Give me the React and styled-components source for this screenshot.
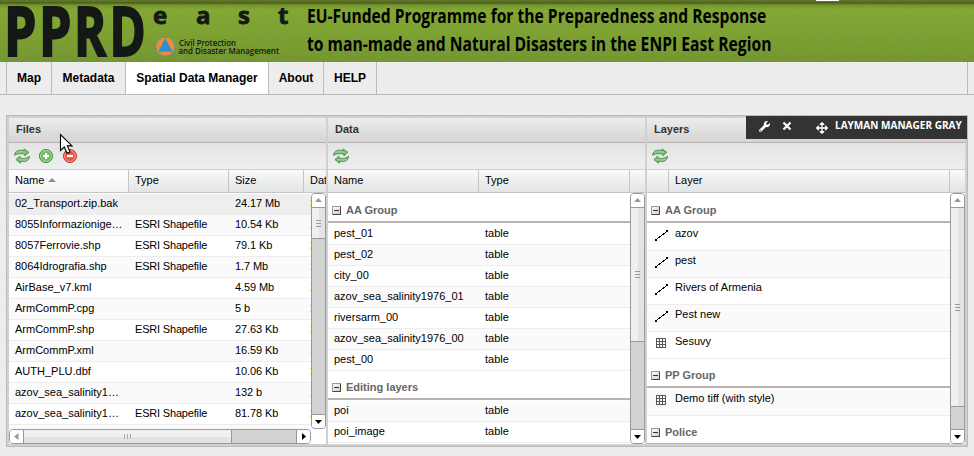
import React from "react";
import styled, { createGlobalStyle, css } from "styled-components";
import { FaWrench, FaArrowsAlt } from "react-icons/fa";

const noise = (opacity) =>
  `url("data:image/svg+xml,${encodeURIComponent(
    `<svg xmlns='http://www.w3.org/2000/svg' width='160' height='160'><filter id='n'><feTurbulence type='fractalNoise' baseFrequency='0.55' numOctaves='3' stitchTiles='stitch'/><feColorMatrix type='saturate' values='0'/></filter><rect width='160' height='160' filter='url(#n)' opacity='${opacity}'/></svg>`
  )}")`;

const GlobalStyle = createGlobalStyle`
  * { box-sizing: border-box; }
  html, body { margin: 0; padding: 0; overflow: hidden; }
  body { background: #ececec; }
`;

const Page = styled.div`
  width: 974px;
  height: 456px;
  overflow: hidden;
  position: relative;
  background: ${noise(0.06)}, #eeeeee;
  font-family: "Liberation Sans", Arial, sans-serif;
  font-size: 11px;
  color: #000;
`;

const Header = styled.header`
  position: relative;
  height: 62px;
  display: flex;
  background: ${noise(0.1)},
    linear-gradient(#5a7021 0, #5a7021 2px, #43570f 2px, #4b6114 3px, #5e7a1c 4px, #759a28 6px, #7fa62c 10px, #7ba12b 30px, #70942a 62px);
`;

const Notch = styled.span`
  position: absolute;
  left: 816px;
  top: 0;
  width: 23px;
  height: 1px;
  background: #fff;
`;

const Logo = styled.svg`
  flex: none;
  width: 307px;
  height: 62px;
  font-family: "Open Sans", sans-serif;
  font-weight: 700;
  fill: #141817;
`;

const Headline = styled.h1`
  margin: 2px 0 0;
  font: 700 20px/28px "Open Sans", sans-serif;
  color: #000;
  white-space: nowrap;
`;

const HeadlineRow = styled.span`
  display: block;
  width: max-content;
  transform-origin: 0 50%;
  transform: scaleX(${(p) => p.$squeeze});
`;

const Nav = styled.nav`
  display: flex;
  height: 33px;
  padding-left: 6px;
  border-bottom: 1px solid #bbb;
`;

const NavTrack = styled.div`
  display: flex;
  width: 962px;
  border: solid #bbb;
  border-width: 0 1px;
`;

const NavItem = styled.a`
  width: ${(p) => p.$width}px;
  border-right: 1px solid #bbb;
  text-align: center;
  font-weight: 700;
  font-size: 12px;
  line-height: 32px;
  white-space: nowrap;
  background: ${(p) => (p.$active ? "#fff" : "transparent")};
`;

const Manager = styled.main`
  position: relative;
  display: flex;
  gap: 2px;
  width: 962px;
  height: 332px;
  margin: 20px 0 0 6px;
  padding: 2px;
  border: 1px solid #bbb;
  background: #d0d0d0;
`;

const Panel = styled.section`
  position: relative;
  display: flex;
  flex-direction: column;
  width: ${(p) => p.$width}px;
  height: 326px;
  overflow: hidden;
  background: #fff;
`;

const PanelTitle = styled.h2`
  margin: 0;
  flex: none;
  height: 25px;
  padding-left: 7px;
  border-bottom: 1px solid #bcb0b0;
  background: linear-gradient(#ededed, #d4d4d4);
  font-size: 11px;
  line-height: 23px;
  color: #333;
`;

const Toolbar = styled.div`
  flex: none;
  display: flex;
  gap: 8px;
  height: 27px;
  padding: 5px 0 0 5px;
  border-bottom: 1px solid #d0d0d0;
  background: linear-gradient(#e3e3e3, #efefef);
`;

const Columns = styled.div`
  flex: none;
  display: flex;
  height: 23px;
  border-bottom: 1px solid #c5c5c5;
  background: linear-gradient(#f9f9f9, #e3e4e6);
  line-height: 20px;
`;

const Column = styled.div`
  flex: none;
  display: flex;
  gap: 4px;
  width: ${(p) => p.$width}px;
  padding-left: 6px;
  border-right: 1px solid #c5c5c5;
  overflow: hidden;
  white-space: nowrap;
  ${(p) => p.$sorted && css`background: linear-gradient(#fff, #f4f4f5);`}
`;

const SortMark = styled.i`
  height: 0;
  margin-top: 8px;
  border: 4px solid transparent;
  border-top: 0;
  border-bottom: 4px solid #8d8d8d;
`;

const Body = styled.div`
  flex: 1;
  min-height: 0;
  display: flex;
`;

const List = styled.div`
  flex: 1;
  min-width: 0;
  padding-top: 1px;
  overflow: hidden;
`;

const Row = styled.div`
  display: flex;
  height: ${(p) => (p.$tall ? 27 : 21)}px;
  border-bottom: 1px solid #ededed;
  background: ${(p) => (p.$selected ? "#eeeeee" : p.$alt ? "#fafafa" : "#fff")};
  line-height: 19px;
`;

const Cell = styled.div`
  flex: none;
  width: ${(p) => p.$width}px;
  padding-left: 6px;
  overflow: hidden;
  white-space: nowrap;
  letter-spacing: ${(p) => p.$tracking || 0}px;
  ${(p) => p.$date && css`color: #e39a2c;`}
`;

const IconCell = styled.div`
  flex: none;
  width: 22px;
  padding: 3px 0 0 7px;
  height: 26px;
`;

const GroupHead = styled.div`
  display: flex;
  align-items: center;
  gap: 5px;
  height: 30px;
  padding: 4px 0 2px 4px;
  background: linear-gradient(#bcb0b0, #bcb0b0) 0 27px / 100% 2px no-repeat;
  font-weight: 700;
  color: #666;
  line-height: 21px;
`;

const Collapse = styled.i`
  width: 9px;
  height: 9px;
  border: 1px solid #777;
  border-color: #999 #444 #444 #999;
  border-radius: 1px;
  background: linear-gradient(#333, #333) 1px 3px / 5px 1px no-repeat,
    linear-gradient(135deg, #fff, #ccc);
`;

const Scroll = styled.div`
  flex: none;
  display: flex;
  flex-direction: ${(p) => (p.$horizontal ? "row" : "column")};
  ${(p) => (p.$horizontal ? "height" : "width")}: 15px;
  ${(p) => p.$length && css`${p.$horizontal ? "width" : "height"}: ${p.$length}px;`}
  border: 1px solid #999;
  border-radius: 4px;
  background: #d3d3d3;
  overflow: hidden;
`;

const ScrollButton = styled.div`
  flex: none;
  display: flex;
  align-items: center;
  justify-content: center;
  width: ${(p) => (p.$horizontal ? 14 : 13)}px;
  height: ${(p) => (p.$horizontal ? 13 : 14)}px;
  border: 0 solid #999;
  ${(p) => {
    const side = p.$horizontal ? (p.$end ? "left" : "right") : p.$end ? "top" : "bottom";
    return css`border-${side}-width: 1px;`;
  }}
  background: #fff;
`;

const ScrollThumb = styled.div`
  flex: none;
  display: flex;
  align-items: center;
  justify-content: center;
  ${(p) => (p.$horizontal ? "width" : "height")}: ${(p) => p.$size}px;
  border: 0 solid #999;
  ${(p) => (p.$horizontal ? "border-right-width" : "border-bottom-width")}: 1px;
  background: linear-gradient(${(p) => (p.$horizontal ? "180deg" : "90deg")}, #f0f0f0 52%, #e3e3e3 52%);
`;

const Grip = styled.i`
  ${(p) =>
    p.$horizontal
      ? css`width: 7px; height: 5px; background: repeating-linear-gradient(90deg, #aaa 0 1px, transparent 1px 3px);`
      : css`width: 5px; height: 7px; background: repeating-linear-gradient(#999 0 1px, transparent 1px 3px);`}
`;

const Spacer = styled.div`
  flex: 1;
`;

const FloatingBar = styled.div`
  position: absolute;
  top: 0;
  right: 0;
  display: flex;
  width: 221px;
  height: 23px;
  padding-left: 13px;
  background: #333;
  color: #fff;
`;

const BarIcon = styled.span`
  flex: none;
  width: ${(p) => p.$width}px;
  padding-top: ${(p) => p.$top}px;
  line-height: 0;
`;

const BarLabel = styled.span`
  font: 700 11px/18px "Open Sans", sans-serif;
  white-space: nowrap;
  transform-origin: 0 50%;
  transform: scaleX(0.913);
`;

const Pointer = styled.svg`
  position: absolute;
  left: 59px;
  top: 133px;
`;

const RefreshIcon = () => (
  <svg width="16" height="16" viewBox="0 0 16 16">
    <g fill="#79bd72" stroke="#3f8a43" strokeWidth=".8" strokeLinejoin="round">
      <path d="M.6 7.300C.8 3.500 3.500 1.900 7 2.200l3.200.3L10 .9 14.900 4.200 10.900 8V6.100L7 5.700C4.500 5.500 3 6.200.6 7.300Z" />
      <path d="M15.600 8.300C15.300 12.200 12.400 13.900 9.200 13.600l-2.800-.3.100 2L1.900 11.600 5.900 8v2.100l3.600.3c2.400.1 4-.8 6.100-2.100Z" />
    </g>
    <path d="M2.500 4.800Q4.500 3.200 11.500 4.200M13.800 10.900Q11.500 12.600 4.800 11.600" fill="none" stroke="#a9d99e" strokeWidth="1" />
  </svg>
);

const RoundIcon = ({ dark, mid, light, plus }) => (
  <svg width="16" height="16" viewBox="0 0 16 16">
    <circle cx="8" cy="8" r="6.600" fill={mid} stroke={dark} strokeWidth=".9" />
    <circle cx="8" cy="8" r="5.400" fill="none" stroke={light} strokeWidth="1" />
    <path d={plus ? "M5 8h6M8 5v6" : "M5 8h6"} stroke="#fff" strokeWidth="2.200" />
  </svg>
);

const LineIcon = () => (
  <svg width="15" height="15" viewBox="0 0 15 15">
    <path d="M2 12.500 13 4.500" stroke="#000" strokeWidth="1" shapeRendering="crispEdges" />
    <path d="M1 12h2v2H1zM12 3h2v2h-2z" fill="#000" />
  </svg>
);

const GridIcon = () => (
  <svg width="15" height="15" viewBox="0 0 15 15">
    <path d="M2.500 3v10M5.500 3v10M8.500 3v10M11.500 3v10M2 3.500h10M2 6.500h10M2 9.500h10M2 12.500h10" stroke="#555" fill="none" />
  </svg>
);

const arrows = {
  up: "M0 5h7L3.500 1z",
  down: "M0 2h7L3.500 6z",
  left: "M5.500 0v7L1 3.500z",
  right: "M2 0v7L6 3.500z",
};

function ScrollBar({ horizontal, length, thumb }) {
  return (
    <Scroll $horizontal={horizontal} $length={length}>
      <ScrollButton $horizontal={horizontal}>
        <svg width="7" height="7"><path d={horizontal ? arrows.left : arrows.up} fill="#999" /></svg>
      </ScrollButton>
      <ScrollThumb $horizontal={horizontal} $size={thumb}>
        <Grip $horizontal={horizontal} />
      </ScrollThumb>
      <Spacer />
      <ScrollButton $horizontal={horizontal} $end>
        <svg width="7" height="7"><path d={horizontal ? arrows.right : arrows.down} fill="#000" /></svg>
      </ScrollButton>
    </Scroll>
  );
}

function Group({ name }) {
  return (
    <GroupHead>
      <Collapse />
      {name}
    </GroupHead>
  );
}

const files = [
  ["02_Transport.zip.bak", "", "24.17 Mb"],
  ["8055Informazionige…", "ESRI Shapefile", "10.54 Kb"],
  ["8057Ferrovie.shp", "ESRI Shapefile", "79.1 Kb"],
  ["8064Idrografia.shp", "ESRI Shapefile", "1.7 Mb"],
  ["AirBase_v7.kml", "", "4.59 Mb"],
  ["ArmCommP.cpg", "", "5 b"],
  ["ArmCommP.shp", "ESRI Shapefile", "27.63 Kb"],
  ["ArmCommP.xml", "", "16.59 Kb"],
  ["AUTH_PLU.dbf", "", "10.06 Kb"],
  ["azov_sea_salinity1…", "", "132 b"],
  ["azov_sea_salinity1…", "ESRI Shapefile", "81.78 Kb"],
];

const tables = [
  { group: "AA Group", start: 0, rows: ["pest_01", "pest_02", "city_00", "azov_sea_salinity1976_01", "riversarm_00", "azov_sea_salinity1976_00", "pest_00"] },
  { group: "Editing layers", start: 7, rows: ["poi", "poi_image"] },
];

const layers = [
  { group: "AA Group", start: 0, rows: [["azov", "line"], ["pest", "line"], ["Rivers of Armenia", "line"], ["Pest new", "line"], ["Sesuvy", "grid"]] },
  { group: "PP Group", start: 5, rows: [["Demo tiff (with style)", "grid"]] },
  { group: "Police", start: 6, rows: [] },
];

const navItems = [
  ["Map", 45],
  ["Metadata", 74],
  ["Spatial Data Manager", 143, true],
  ["About", 55],
  ["HELP", 53],
];

export default function App() {
  return (
    <Page>
      <GlobalStyle />
      <Header>
        <Notch />
        <Logo viewBox="0 0 307 62">
          <g fontSize="68" stroke="#141817" strokeWidth="2">
            <text transform="translate(4 56) scale(.76 1)">P</text>
            <text transform="translate(39 56) scale(.76 1)">P</text>
            <text transform="translate(74 56) scale(.72 1)">R</text>
            <text transform="translate(109.500 56) scale(.72 1)">D</text>
          </g>
          <g fontSize="24" stroke="#141817" strokeWidth=".8">
            <text x="153" y="23.500">e</text>
            <text x="196" y="23.500">a</text>
            <text x="238" y="23.500">s</text>
            <text x="278" y="23.500">t</text>
          </g>
          <circle cx="165.300" cy="46.500" r="9.500" fill="#ef8a35" stroke="#5d9c9c" strokeWidth="1" />
          <path d="M165.300 38.200 172.300 51.800H158.300Z" fill="#2b8fd0" />
          <g fontSize="8" fontWeight="600">
            <text x="179" y="45.700" textLength="57" lengthAdjust="spacingAndGlyphs">Civil Protection</text>
            <text x="178.500" y="54" textLength="100.500" lengthAdjust="spacingAndGlyphs">and Disaster Management</text>
          </g>
        </Logo>
        <Headline>
          <HeadlineRow $squeeze={0.781}>EU-Funded Programme for the Preparedness and Response</HeadlineRow>
          <HeadlineRow $squeeze={0.784}>to man-made and Natural Disasters in the ENPI East Region</HeadlineRow>
        </Headline>
      </Header>
      <Nav>
        <NavTrack>
          {navItems.map(([label, width, active]) => (
            <NavItem key={label} $width={width} $active={active}>{label}</NavItem>
          ))}
        </NavTrack>
      </Nav>
      <Manager>
        <Panel $width={317}>
          <PanelTitle>Files</PanelTitle>
          <Toolbar>
            <RefreshIcon />
            <RoundIcon dark="#3f8f45" mid="#6fbf62" light="#a5d99a" plus />
            <RoundIcon dark="#c0392f" mid="#e8574a" light="#f29a90" />
          </Toolbar>
          <Columns>
            <Column $width={120} $sorted>Name<SortMark /></Column>
            <Column $width={100}>Type</Column>
            <Column $width={75}>Size</Column>
            <Column $width={60}>Date</Column>
          </Columns>
          <Body>
            <List>
              {files.map(([name, type, size], i) => (
                <Row key={i} $alt={i % 2 === 1} $selected={i === 0}>
                  <Cell $width={120}>{name}</Cell>
                  <Cell $width={100} $tracking={-0.18}>{type}</Cell>
                  <Cell $width={75} $tracking={-0.1}>{size}</Cell>
                  <Cell $width={60} $date>2</Cell>
                </Row>
              ))}
              <Row $alt />
            </List>
            <ScrollBar thumb={31} />
          </Body>
          <ScrollBar horizontal length={302} thumb={208} />
        </Panel>
        <Panel $width={317}>
          <PanelTitle>Data</PanelTitle>
          <Toolbar><RefreshIcon /></Toolbar>
          <Columns>
            <Column $width={151}>Name</Column>
            <Column $width={151}>Type</Column>
          </Columns>
          <Body>
            <List>
              {tables.map(({ group, start, rows }) => (
                <React.Fragment key={group}>
                  <Group name={group} />
                  {rows.map((name, i) => (
                    <Row key={name} $alt={(start + i) % 2 === 1}>
                      <Cell $width={151}>{name}</Cell>
                      <Cell $width={151}>table</Cell>
                    </Row>
                  ))}
                </React.Fragment>
              ))}
            </List>
            <ScrollBar thumb={134} />
          </Body>
        </Panel>
        <Panel $width={318}>
          <PanelTitle>Layers</PanelTitle>
          <Toolbar><RefreshIcon /></Toolbar>
          <Columns>
            <Column $width={22} />
            <Column $width={281}>Layer</Column>
          </Columns>
          <Body>
            <List>
              {layers.map(({ group, start, rows }) => (
                <React.Fragment key={group}>
                  <Group name={group} />
                  {rows.map(([name, kind], i) => (
                    <Row key={name} $tall $alt={(start + i) % 2 === 1}>
                      <IconCell>{kind === "line" ? <LineIcon /> : <GridIcon />}</IconCell>
                      <Cell $width={281}>{name}</Cell>
                    </Row>
                  ))}
                </React.Fragment>
              ))}
            </List>
            <ScrollBar thumb={199} />
          </Body>
        </Panel>
        <FloatingBar>
          <BarIcon $width={23} $top={5}><FaWrench size={11} /></BarIcon>
          <BarIcon $width={34} $top={5}>
            <svg width="10" height="10"><path d="M1.500 1.500 8.500 8.500M8.500 1.500 1.500 8.500" stroke="#fff" strokeWidth="2.200" /></svg>
          </BarIcon>
          <BarIcon $width={19} $top={6}><FaArrowsAlt size={12} /></BarIcon>
          <BarLabel>LAYMAN MANAGER GRAY</BarLabel>
        </FloatingBar>
      </Manager>
      <Pointer width="16" height="23" viewBox="0 0 16 23">
        <path d="M1.500 1.500V17.500L5.300 14 8 20.300 11 19 8.300 12.900H13Z" fill="#fff" stroke="#000" strokeWidth="1.100" />
      </Pointer>
    </Page>
  );
}
